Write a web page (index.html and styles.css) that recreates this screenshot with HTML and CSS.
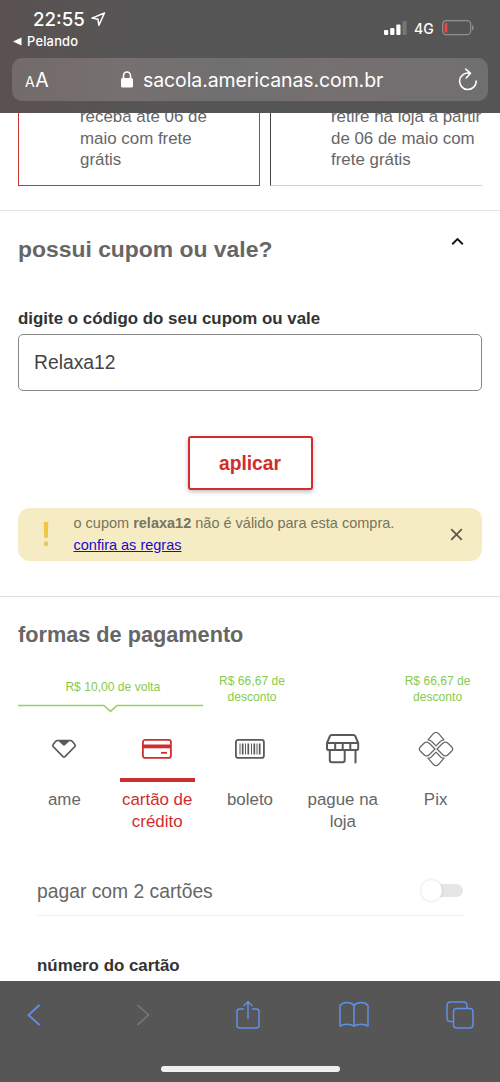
FILE: index.html
```html
<!DOCTYPE html>
<html lang="pt-BR">
<head>
<meta charset="utf-8">
<meta name="viewport" content="width=device-width">
<title>sacola americanas</title>
<link rel="stylesheet" href="styles.css">
</head>
<body>
<div class="phone">
  <header class="browser-top">
    <div class="status">
      <div class="status-left">
        <div class="clock">22:55
          <svg width="15" height="15" viewBox="0 0 15 15"><path d="M13.500 1 1 6.100l6 1.200.9 6z" fill="none" stroke="#fff" stroke-width="1.500" stroke-linejoin="round"/></svg>
        </div>
        <div class="back-app"><svg width="9" height="9" viewBox="0 0 9 9"><path d="M0 4.500 8.500 .5v8z" fill="#fff"/></svg>Pelando</div>
      </div>
      <div class="status-right">
        <svg width="23" height="15" viewBox="0 0 23 15"><g fill="#fff"><rect x="0" y="9" width="4.200" height="5" rx="1"/><rect x="6.200" y="7" width="4.200" height="7" rx="1"/><rect x="12.300" y="3.500" width="4.200" height="10.500" rx="1"/></g><rect x="18.400" y="0" width="4.200" height="14" rx="1" fill="#777576"/></svg>
        <span class="network">4G</span>
        <svg width="32" height="16" viewBox="0 0 32 16"><rect x=".7" y=".7" width="28" height="14" rx="3.600" fill="none" stroke="#929091" stroke-width="1.200"/><path d="M30 5v5.500c2-.7 2-4.800 0-5.500z" fill="#929091"/><path d="M5.300 3v9.500H4.500a2 2 0 0 1-2-2V5a2 2 0 0 1 2-2z" fill="#f0483f"/></svg>
      </div>
    </div>
    <div class="address">
      <div class="text-size"><span class="small-a">A</span>A</div>
      <div class="url"><svg width="12" height="17" viewBox="0 0 12 17"><rect y="7" width="12" height="9.500" rx="1.600" fill="#fff"/><path d="M2.500 8V4.700a3.500 3.700 0 0 1 7 0V8" fill="none" stroke="#fff" stroke-width="1.600"/></svg><span>sacola.americanas.com.br</span></div>
      <svg class="reload" width="20" height="24" viewBox="0 0 20 24"><path d="M11.500 5.100A8.300 8.300 0 1 0 18.200 13M7.700 1l4.800 4.300L8.200 10" fill="none" stroke="#fff" stroke-width="1.600" stroke-linecap="round" stroke-linejoin="round"/></svg>
    </div>
  </header>

  <main class="page">
    <section class="shipping">
      <div class="ship-card selected">receba até 06 de maio com frete grátis</div>
      <div class="ship-card">retire na loja a partir de 06 de maio com frete grátis</div>
    </section>

    <section class="coupon">
      <div class="coupon-head">
        <h2>possui cupom ou vale?</h2>
        <svg width="13" height="9" viewBox="0 0 13 9"><path d="M1.200 7.200 6.500 2l5.300 5.200" fill="none" stroke="#111" stroke-width="1.900"/></svg>
      </div>
      <label class="field-label" for="coupon">digite o código do seu cupom ou vale</label>
      <input class="coupon-input" id="coupon" type="text" value="Relaxa12">
      <button class="apply">aplicar</button>
      <div class="alert">
        <svg class="bang" width="6" height="25" viewBox="0 0 6 25"><path d="M.7 0h4.600l-.5 16H1.200z" fill="#f0c644"/><rect x="1" y="19.500" width="4" height="4.500" rx="1" fill="#e9c65b"/></svg>
        <div class="alert-text">o cupom <b>relaxa12</b> não é válido para esta compra.<br><a href="#">confira as regras</a></div>
        <svg width="13" height="13" viewBox="0 0 13 13"><path d="m1.200 1.200 10.600 10.600m0-10.600L1.200 11.800" stroke="#5c5a50" stroke-width="1.800"/></svg>
      </div>
    </section>

    <section class="payment">
      <h2 class="pay-title">formas de pagamento</h2>
      <div class="promos">
        <div class="promo wide">R$ 10,00 de volta
          <svg width="185" height="9" viewBox="0 0 185 9"><path d="M0 1.500h86l6.500 5.900 6.500-5.900h86" fill="none" stroke="#94d162" stroke-width="1.500"/></svg>
        </div>
        <div class="promo">R$ 66,67 de desconto</div>
        <div class="promo last">R$ 66,67 de desconto</div>
      </div>
      <div class="methods">
        <div class="method">
          <div class="icon"><svg width="26" height="20" viewBox="0 0 26 20"><path d="M6.500 1.500h13q1 0 1.700.8l2.700 3.200q.8 1 0 2L14 17.700q-1 .9-2 0L2.100 7.500q-.8-1 0-2l2.700-3.200q.7-.8 1.700-.8z" fill="none" stroke="#595959" stroke-width="1.700"/><path d="M7 1.500h12L14 6.300q-1 .8-2 0z" fill="#595959"/></svg></div>
          <span>ame</span>
        </div>
        <div class="method active">
          <div class="icon"><svg width="30" height="20" viewBox="0 0 30 20"><rect x=".9" y=".9" width="28" height="18" rx="2.200" fill="none" stroke="#cf2e2e" stroke-width="1.800"/><path d="M1 5.500h28v3.800H1z" fill="#cf2e2e"/><path d="M19 13.800h6" stroke="#cf2e2e" stroke-width="1.800"/></svg></div>
          <span>cartão de crédito</span>
        </div>
        <div class="method">
          <div class="icon"><svg width="30" height="20" viewBox="0 0 30 20"><rect x=".9" y=".9" width="28" height="18" rx="2.200" fill="none" stroke="#595959" stroke-width="1.800"/><path d="M5 4.500v11M10.500 4.500v11M16.500 4.500v11M22 4.500v11" stroke="#595959" stroke-width="1"/><path d="M7.700 4.500v11M13.300 4.500v11M19.300 4.500v11M24.700 4.500v11" stroke="#595959" stroke-width="1.700"/></svg></div>
          <span>boleto</span>
        </div>
        <div class="method">
          <div class="icon"><svg width="34" height="30" viewBox="0 0 34 30"><g fill="none" stroke="#595959" stroke-width="2" stroke-linejoin="round" stroke-linecap="round"><path d="M5.500 1h22q1.300 0 1.700 1l3 7v5.200q0 1.800-1.800 1.800H2.800Q1 16 1 14.200V9l3-7q.4-1 1.500-1zM1.500 9h30.500M9.200 9v7M16.700 9v7M24.300 9v7M3.800 16.500v9.800q0 2 2 2h10.900q2 0 2-2v-9.800M29.500 16.500v12"/></g></svg></div>
          <span>pague na loja</span>
        </div>
        <div class="method">
          <div class="icon"><svg width="36" height="36" viewBox="0 0 36 36"><g fill="none" stroke="#666" stroke-width="1.250" stroke-linejoin="round"><path d="M10 8.800 15.300 2.700Q18 0 20.700 2.700L26 8.800Q23.500 9 22 10.700L18 14.900 14 10.700Q12.500 9 10 8.800z"/><path d="M10 27.200 15.300 33.300Q18 36 20.700 33.300L26 27.200Q23.500 27 22 25.300L18 21.100 14 25.300Q12.500 27 10 27.200z"/><path d="M17 18 11.500 12.500Q8.700 9.700 6 12.300L2 16.300Q.6 18 2 19.700L6 23.700Q8.700 26.300 11.500 23.500zM19 18 24.500 12.500Q27.300 9.700 30 12.300L34 16.300Q35.400 18 34 19.700L30 23.700Q27.300 26.300 24.500 23.500z"/></g></svg></div>
          <span>Pix</span>
        </div>
      </div>
      <div class="two-cards"><span>pagar com 2 cartões</span><div class="toggle"><i></i></div></div>
      <div class="card-number">
        <label class="field-label">número do cartão</label>
        <div class="card-field"></div>
      </div>
    </section>
  </main>

  <footer class="browser-bottom">
    <nav class="tools">
      <svg width="30" height="24" viewBox="-8 0 30 24"><path d="M12.500 2 1.500 12l11 10" fill="none" stroke="#5f8fe6" stroke-width="1.800"/></svg>
      <svg width="30" height="24" viewBox="-10 0 30 24"><path d="m1.500 2 11 10-11 10" fill="none" stroke="#777" stroke-width="1.600"/></svg>
      <svg width="30" height="30" viewBox="-4 0 30 30"><path d="M8 9H3.500Q1 9 1 11.500v14Q1 28 3.500 28h17q2.500 0 2.500-2.500v-14Q23 9 20.500 9H16M12 19V1.500M7.500 6 12 1.500 16.500 6" fill="none" stroke="#5f8fe6" stroke-width="1.500" stroke-linejoin="round"/></svg>
      <svg width="30" height="27" viewBox="0 0 30 27"><path d="M15 4.500Q12.500 1.500 8 1.500T1 4.500V25q3-1.800 7-1.800t7 1.800q3-1.800 7-1.800t7 1.800V4.500q-2.500-3-7-3t-7 3zM15 4.500V25" fill="none" stroke="#5f8fe6" stroke-width="1.500" stroke-linejoin="round"/></svg>
      <svg width="30" height="28" viewBox="-1 0 30 28"><path d="M7.500 20.500h-3Q1 20.500 1 17V4.500Q1 1 4.500 1h13Q21 1 21 4.500v3" fill="none" stroke="#5f8fe6" stroke-width="1.500"/><rect x="7.500" y="7.500" width="19.500" height="19.500" rx="3.200" fill="none" stroke="#5f8fe6" stroke-width="1.500"/></svg>
    </nav>
    <div class="home-bar"></div>
  </footer>
</div>
</body>
</html>
```

FILE: styles.css
```css
* { box-sizing: border-box; }
body { margin: 0; background: #fff; font-family: "Liberation Sans", Arial, sans-serif; color: #666; }
svg { display: block; flex: none; }
h2 { margin: 0; }
.phone { width: 500px; height: 1082px; display: flex; flex-direction: column; overflow: hidden; }

.browser-top { height: 113px; flex: none; background: linear-gradient(70deg, #5c5050 0, #575555 25%, #565555 100%); padding: 0 12px; color: #fff; font-family: Inter, sans-serif; }
.status { height: 58px; display: flex; justify-content: space-between; }
.status-left { padding-top: 8px; }
.clock { display: flex; align-items: center; gap: 6px; height: 22px; padding-left: 21px; font-size: 18.700px; font-weight: 500; }
.back-app { display: flex; align-items: center; gap: 5px; height: 16px; margin-top: 3px; padding-left: 1px; font-size: 12.900px; font-weight: 500; letter-spacing: .2px; }
.status-right { display: flex; align-items: center; height: 16px; margin-top: 20px; padding-right: 14px; }
.network { width: 35px; padding-left: 7px; font-size: 14px; font-weight: 500; }
.address { height: 43px; border-radius: 10px; background: linear-gradient(90deg, #736a6a, #777070 22%, #706f6f 45%, #767070 65%, #706f70); display: flex; align-items: center; padding: 0 10px 0 13px; }
.text-size { width: 96px; font-size: 19.500px; letter-spacing: -.3px; }
.small-a { font-size: 14px; margin-right: 1px; }
.url { display: flex; align-items: center; gap: 10px; font-size: 19.500px; white-space: nowrap; letter-spacing: -.1px; }
.reload { margin-left: auto; }

.page { height: 868px; overflow: hidden; background: #fff; }
.shipping { height: 97px; overflow: hidden; display: flex; align-items: flex-end; gap: 10px; margin: 0 18px; padding-bottom: 24px; }
.ship-card { flex: none; width: 242px; height: 100px; padding: 19px 10px 0 60px; font-size: 16.900px; line-height: 21.700px; border: 1px solid #d2d2d2; border-left: 1px solid #444; }
.ship-card.selected { padding-right: 40px; border: 1px solid #c9362f; padding-left: 61px; }

.coupon { height: 386px; border-top: 1px solid #e3e3e3; padding: 24px 18px 0; }
.coupon-head { display: flex; justify-content: space-between; height: 74px; padding-right: 18px; }
.coupon-head h2 { font-size: 22.900px; line-height: 28px; color: #666; }
.coupon-head svg { margin-top: 2px; }
.field-label { display: block; font-size: 16.900px; line-height: 20px; font-weight: bold; color: #333; }
.coupon-input { display: block; width: 100%; height: 57px; margin-top: 5px; padding: 1px 15px 0; border: 1px solid #888; border-radius: 5px; font: 19.300px "Liberation Sans", Arial, sans-serif; color: #444; background: #fff; }
.apply { display: block; width: 125px; height: 54px; margin: 45px auto 0; padding: 2px 0 0; border: 2px solid #cf2e2e; border-radius: 3px; background: #fff; color: #cf2e2e; font: bold 19.300px "Liberation Sans", Arial, sans-serif; box-shadow: 0 2px 4px rgba(0,0,0,.25); }
.alert { display: flex; align-items: center; height: 53px; margin-top: 18px; padding: 0 19px 0 25px; border-radius: 12px; background: #f6ecc3; font-size: 14.500px; line-height: 21.700px; color: #77745f; }
.alert-text { flex: 1; padding-left: 24.500px; }
.alert a { color: #2109cf; }

.payment { border-top: 1px solid #dedede; padding: 25px 18px 0; }
.pay-title { font-size: 21.700px; line-height: 26px; }
.promos { display: grid; grid-template-columns: repeat(5, 1fr); height: 58px; padding-top: 26px; color: #86cc4d; font-size: 12.100px; line-height: 15.700px; text-align: center; }
.promo { padding: 0 10px; margin-left: 4px; }
.promo.wide { grid-column: span 2; margin: 0; padding: 6px 0 0 4px; }
.promo.wide svg { margin: 8px 0 0 -4px; }
.promo.last { grid-column: 5; }
.methods { display: grid; grid-template-columns: repeat(5, 1fr); font-size: 16.900px; line-height: 21.700px; text-align: center; margin-top: 19px; }
.method { display: flex; flex-direction: column; align-items: center; }
.icon { width: 75px; height: 57px; display: flex; align-items: center; justify-content: center; padding-bottom: 5px; border-bottom: 4px solid transparent; margin-bottom: 7px; }
.method span { width: 76px; }
.active { color: #cf2e2e; }
.active .icon { border-color: #cf2e2e; }
.two-cards { display: flex; justify-content: space-between; height: 36px; margin: 48px 19px 0; font-size: 19.300px; line-height: 24px; border-bottom: 1px solid #eee; }
.toggle { width: 33px; height: 13px; margin-top: 4px; border-radius: 7px; background: #e6e6e6; display: flex; align-items: center; }
.toggle i { flex: none; width: 21px; height: 21px; margin-left: -9px; border-radius: 50%; background: #fff; box-shadow: 0 0 3px rgba(0,0,0,.18); }
.card-number { margin: 40px 19px 0; }
.card-field { height: 50px; margin-top: 5px; border: 1px solid #888; border-radius: 5px; }

.browser-bottom { flex: none; height: 101px; background: #565656; }
.tools { display: flex; align-items: center; justify-content: space-between; height: 67px; padding: 0 25px 0 19px; }
.home-bar { width: 179px; height: 6px; margin: 18px auto 0; border-radius: 3px; background: #f0f0f0; }
```
